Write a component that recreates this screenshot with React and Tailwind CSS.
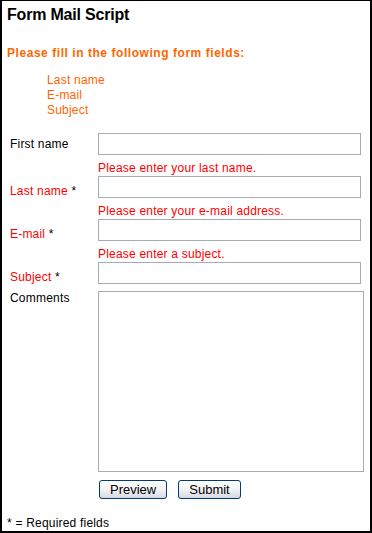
import React from "react";

function ErrorLine({ children }) {
  return <div className="h-[15px] leading-[15px] text-[#ff0000] whitespace-nowrap">{children}</div>;
}

function TextInput() {
  return <input type="text" className="block w-[263px] h-[22px] border border-[#a5acb2] bg-white outline-none" />;
}

function Btn({ children }) {
  return (
    <button
      type="button"
      className="h-[19px] px-[10px] border border-[#003c74] rounded-[3px] bg-gradient-to-b from-white via-[#f3f3f6] to-[#d6d9e3] text-[13px] leading-[15px] tracking-normal text-black font-['Liberation_Sans',Arial,sans-serif]"
    >
      {children}
    </button>
  );
}

export default function App() {
  return (
    <div className="w-[372px] h-[533px] box-border border-t border-l-2 border-r-2 border-b-2 border-black bg-white text-black text-[12px] leading-[14px] tracking-[0.2px] font-['Liberation_Sans',Arial,sans-serif] pl-[5px] pt-[4px]">
      <h1 className="text-[16px] leading-[19px] font-bold tracking-[-0.2px]">Form Mail Script</h1>

      <p className="mt-[22px] font-bold text-[#ff6600] tracking-[0.55px]">Please fill in the following form fields:</p>

      <ul className="mt-[13px] ml-[40px] text-[#ff6600] leading-[15px]">
        <li>Last name</li>
        <li>E-mail</li>
        <li>Subject</li>
      </ul>

      <div className="mt-[15px] flex flex-col">
        {/* First name */}
        <div className="flex items-center">
          <div className="w-[91px] pl-[3px]">First name</div>
          <TextInput />
        </div>

        {/* Last name */}
        <div className="flex items-end mt-[6px]">
          <div className="w-[91px] pl-[3px]">
            <span className="text-[#ff0000]">Last name</span> *
          </div>
          <div className="flex flex-col">
            <ErrorLine>Please enter your last name.</ErrorLine>
            <TextInput />
          </div>
        </div>

        {/* E-mail */}
        <div className="flex items-end mt-[6px]">
          <div className="w-[91px] pl-[3px]">
            <span className="text-[#ff0000]">E-mail</span> *
          </div>
          <div className="flex flex-col">
            <ErrorLine>Please enter your e-mail address.</ErrorLine>
            <TextInput />
          </div>
        </div>

        {/* Subject */}
        <div className="flex items-end mt-[6px]">
          <div className="w-[91px] pl-[3px]">
            <span className="text-[#ff0000]">Subject</span> *
          </div>
          <div className="flex flex-col">
            <ErrorLine>Please enter a subject.</ErrorLine>
            <TextInput />
          </div>
        </div>

        {/* Comments */}
        <div className="flex items-start mt-[7px]">
          <div className="w-[91px] pl-[3px]">Comments</div>
          <textarea className="block w-[266px] h-[181px] border border-[#a5acb2] bg-white outline-none resize-none" />
        </div>

        {/* Buttons */}
        <div className="flex mt-[8px] ml-[92px] gap-[11px]">
          <Btn>Preview</Btn>
          <Btn>Submit</Btn>
        </div>
      </div>

      <p className="mt-[17px]">* = Required fields</p>
    </div>
  );
}
